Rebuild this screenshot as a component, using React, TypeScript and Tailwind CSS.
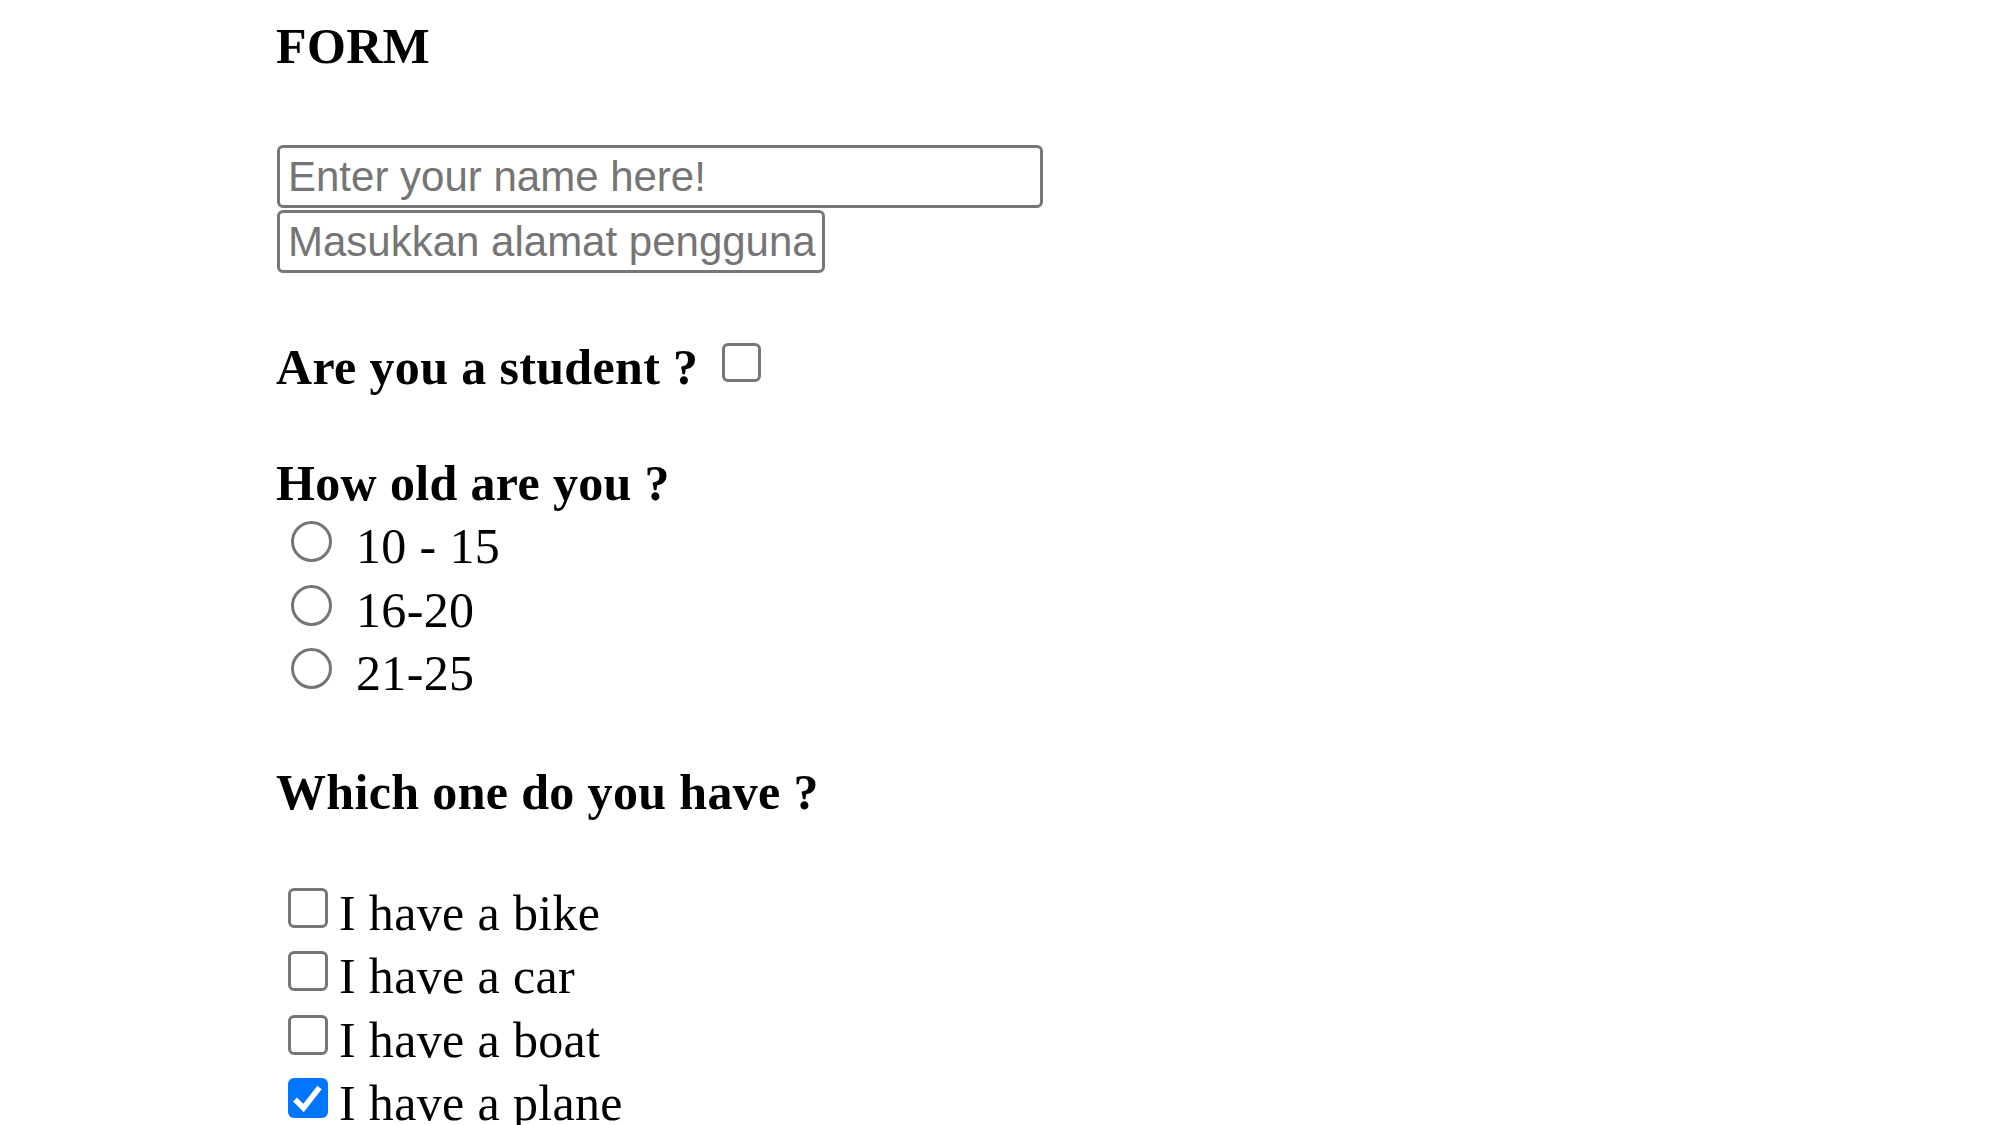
import React from "react";

function Box({ checked = false, className = "" }: { checked?: boolean; className?: string }) {
  if (checked) {
    return (
      <span
        className={`inline-block overflow-hidden align-baseline w-[40px] h-[40px] rounded-[6px] bg-[#0075ff] ${className}`}
      >
        <svg viewBox="0 0 40 40" width="40" height="40" className="block">
          <path
            d="M7 21.5 L15.5 30 L31.5 9.5"
            fill="none"
            stroke="#ffffff"
            strokeWidth="5.5"
            strokeLinejoin="miter"
            strokeLinecap="butt"
          />
        </svg>
      </span>
    );
  }
  return (
    <span
      className={`inline-block overflow-hidden align-baseline w-[40px] h-[40px] rounded-[6px] border-[3px] border-[#767676] bg-white ${className}`}
    />
  );
}

function Radio() {
  return (
    <span className="inline-block overflow-hidden align-baseline ml-[15px] mr-[24px] mb-[1px] w-[41px] h-[41px] rounded-full border-[3px] border-[#767676] bg-white" />
  );
}

export default function App() {
  const ages = ["10 - 15", "16-20", "21-25"];
  const items = [
    { label: "I have a bike", checked: false },
    { label: "I have a car", checked: false },
    { label: "I have a boat", checked: false },
    { label: "I have a plane", checked: true },
  ];
  return (
    <div className="w-[2000px] h-[1125px] overflow-hidden bg-white text-black pl-[276px] pt-[14px] font-['Liberation_Serif','Times_New_Roman',serif] text-[50px] tracking-[0.35px]">
      <div className="font-bold leading-[64px]">FORM</div>

      <div className="mt-[67px] flex flex-col items-start gap-[2px] tracking-normal">
        <input
          type="text"
          placeholder="Enter your name here!"
          className="ml-px h-[63px] w-[766px] rounded-[6px] border-[3px] border-[#767676] bg-white pl-[8px] pr-[6px] font-['Liberation_Sans',Arial,sans-serif] text-[42px] text-black outline-none placeholder:text-[#757575]"
        />
        <input
          type="text"
          placeholder="Masukkan alamat pengguna"
          className="ml-px h-[63px] w-[548px] rounded-[6px] border-[3px] border-[#767676] bg-white pl-[8px] pr-[4px] font-['Liberation_Sans',Arial,sans-serif] text-[42px] text-black outline-none placeholder:text-[#757575]"
        />
      </div>

      <div className="mt-[62px] font-bold leading-[64px] whitespace-nowrap">
        Are you a student ?
        <span className="inline-block overflow-hidden align-baseline ml-[24px] mb-[2px] w-[39px] h-[39px] rounded-[6px] border-[3px] border-[#767676] bg-white" />
      </div>

      <div className="mt-[52px] font-bold leading-[64px]">How old are you ?</div>
      {ages.map((a) => (
        <div key={a} className="leading-[63.5px] whitespace-nowrap">
          <Radio />
          {a}
        </div>
      ))}

      <div className="mt-[54px] font-bold leading-[64px]">Which one do you have ?</div>
      <div className="mt-[58px]">
        {items.map((it) => (
          <div key={it.label} className="leading-[63.5px] whitespace-nowrap">
            <Box checked={it.checked} className="ml-[12px] mr-[11px] mb-[2px]" />
            {it.label}
          </div>
        ))}
      </div>
    </div>
  );
}
